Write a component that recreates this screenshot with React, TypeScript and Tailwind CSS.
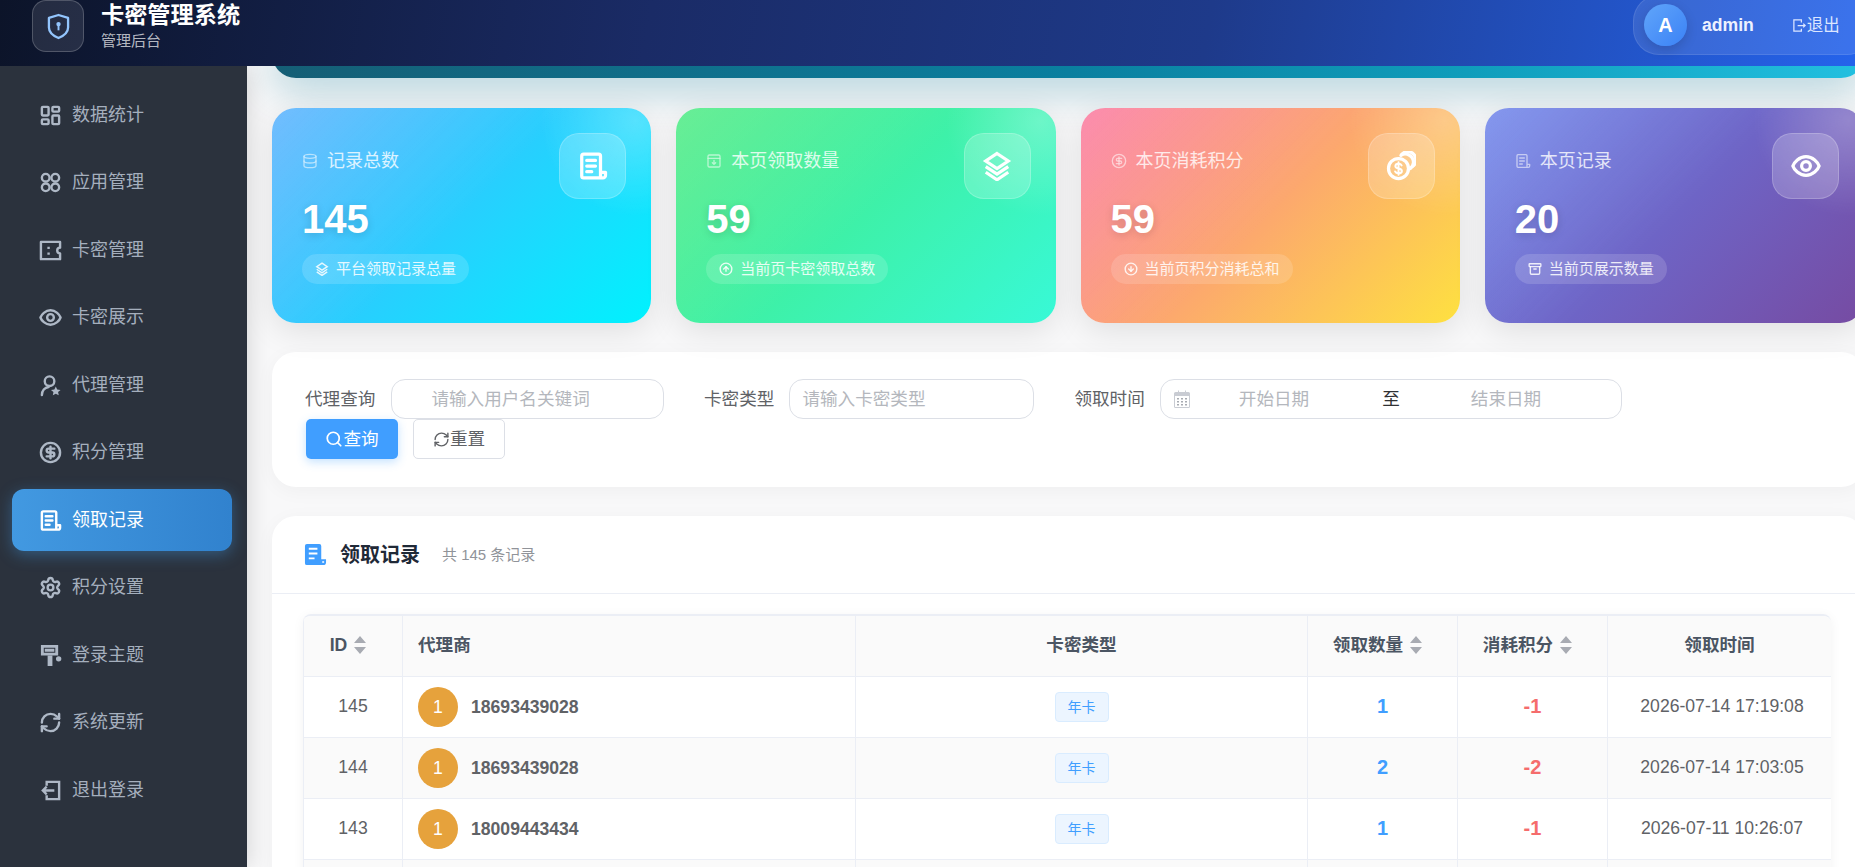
import React from "react";
import { Archive, CircleArrowDown, CircleArrowUp, CircleDollarSign, Database, LayoutDashboard, RefreshCw, Search, Settings } from "lucide-react";

type P = { className?: string };
const base = { fill: "none", stroke: "currentColor", strokeWidth: 2, strokeLinecap: "round" as const, strokeLinejoin: "round" as const, viewBox: "0 0 24 24" };

const Apps = ({ className }: P) => (
  <svg {...base} className={className}>
    <circle cx="7" cy="7" r="4" /><circle cx="17" cy="7" r="4" /><circle cx="7" cy="17" r="4" /><circle cx="17" cy="17" r="4" />
  </svg>
);
const TicketIcon = ({ className }: P) => (
  <svg {...base} className={className} strokeLinecap="butt">
    <path d="M2 3h20v6a3 3 0 0 0 0 6v6H2z" />
    <path d="M10 8v2.500M10 14v2.500" />
  </svg>
);
const EyeIcon = ({ className }: P) => (
  <svg {...base} className={className}>
    <path d="M12 4.500C6.500 4.500 2.500 9 1.500 12c1 3 5 7.500 10.500 7.500S21.500 15 22.500 12C21.500 9 17.500 4.500 12 4.500z" />
    <circle cx="12" cy="12" r="3.500" />
  </svg>
);
const UserStarIcon = ({ className }: P) => (
  <svg {...base} className={className}>
    <circle cx="11" cy="7.500" r="5" />
    <path d="M3 22c0-4.500 3-8 7-8.500" />
    <path d="M17.500 13l1.500 3.200 3.500.4-2.600 2.300.7 3.400-3.100-1.700-3.100 1.700.7-3.400-2.600-2.300 3.500-.4z" fill="currentColor" stroke="none" />
  </svg>
);
const RecordIcon = ({ className }: P) => (
  <svg {...base} className={className}>
    <path d="M18 17V4a1.500 1.500 0 0 0-1.500-1.500h-12A1.500 1.500 0 0 0 3 4v16a1.500 1.500 0 0 0 1.500 1.500H20a2 2 0 0 0 2-2V17h-4v4.500" />
    <path d="M7 7.500h7M7 12h7M7 16.500h4" />
  </svg>
);
const RecordFilled = ({ className }: P) => (
  <svg viewBox="0 0 24 24" className={className}>
    <path fill="currentColor" d="M3 1h13a2 2 0 0 1 2 2v14h5v3a3 3 0 0 1-3 3H3a2 2 0 0 1-2-2V3a2 2 0 0 1 2-2z" />
    <path fill="#fff" d="M5 5h9v2H5zM5 10h9v2H5zM5 15h6v2H5zM19 19h2v1.500h-2z" />
  </svg>
);
const CalendarDown = ({ className }: P) => (
  <svg {...base} className={className}>
    <rect x="3" y="3" width="18" height="18" rx="2" />
    <path d="M3 8h18M12 11v6M9.500 14.500 12 17l2.500-2.500" />
  </svg>
);
const LogoutLeft = ({ className }: P) => (
  <svg {...base} className={className} strokeLinecap="butt" strokeLinejoin="miter">
    <path d="M8 7V3h13v18H8v-4" />
    <path d="M16 12H4M8 8l-4 4 4 4" />
  </svg>
);
const LogoutRight = ({ className }: P) => (
  <svg {...base} className={className} strokeLinecap="butt" strokeLinejoin="miter">
    <path d="M15 7V3H3v18h12v-4" />
    <path d="M9 12h12M18 9l3 3-3 3" />
  </svg>
);
const Roller = ({ className }: P) => (
  <svg viewBox="0 0 24 24" className={className} fill="currentColor">
    <path fillRule="evenodd" d="M2 1h18v11H2zM5 4v5h12V4z" />
    <path d="M6 5h10v3H6zM9 12h5v11H9z" />
    <circle cx="20.500" cy="15.500" r="2.800" />
  </svg>
);
const Stack = ({ className }: P) => (
  <svg {...base} className={className} strokeLinejoin="miter" strokeLinecap="butt">
    <path d="M12 2 21 8l-9 6-9-6z" />
    <path d="M3 12.500l9 6 9-6M3 17l9 6 9-6" />
  </svg>
);
const CoinStack = ({ className }: P) => (
  <svg {...base} className={className}>
    <path d="M12 3.500a6.500 6.500 0 1 1 9 9" />
    <path d="M12.500 3a6.800 6.800 0 0 1 9.500 6 7 7 0 0 1-2.500 5" />
    <circle cx="10" cy="14" r="8" />
    <path d="M12.500 11.500c-.5-1-1.500-1.300-2.500-1.300-1.300 0-2.500.7-2.500 1.900 0 2.500 5.200 1.300 5.200 3.800 0 1.200-1.300 1.900-2.700 1.900-1.100 0-2.200-.4-2.700-1.400M10 9v10" strokeWidth="1.600" />
  </svg>
);
const Shield = ({ className }: P) => (
  <svg viewBox="0 0 24 28" className={className} fill="none" stroke="currentColor" strokeWidth="2.400" strokeLinejoin="round">
    <path d="M12 2 22 5v10c0 5-4 8.500-10 11C6 23.500 2 20 2 15V5z" />
    <circle cx="12" cy="11.500" r="2.300" fill="currentColor" stroke="none" />
    <path d="M12 12v6" strokeWidth="2" />
  </svg>
);
const Calendar = ({ className }: P) => (
  <svg viewBox="0 0 16 18" className={className}>
    <path fill="#c9ccd3" d="M1.500 2H4V.5h1V2h6V.5h1V2h2.500A1.500 1.500 0 0 1 16 3.500v13a1.500 1.500 0 0 1-1.500 1.500h-13A1.500 1.500 0 0 1 0 16.500v-13A1.500 1.500 0 0 1 1.500 2z" />
    <path fill="#fff" d="M1 6h14v10.500a.5.5 0 0 1-.5.5h-13a.5.5 0 0 1-.5-.5z" />
    <path fill="#a8abb2" d="M3 8h2v1.500H3zM7 8h2v1.500H7zM11 8h2v1.500h-2zM3 11h2v1.500H3zM7 11h2v1.500H7zM11 11h2v1.500h-2zM3 14h2v1.500H3zM7 14h2v1.500H7zM11 14h2v1.500h-2z" />
  </svg>
);
const Sort = () => (
  <svg viewBox="0 0 12 18" className="h-[18px] w-[12px] shrink-0" fill="#a8abb2">
    <path d="M6 0l6 7H0zM0 11h12l-6 7z" />
  </svg>
);

const nav = [
  ["数据统计", LayoutDashboard], ["应用管理", Apps], ["卡密管理", TicketIcon], ["卡密展示", EyeIcon],
  ["代理管理", UserStarIcon], ["积分管理", CircleDollarSign], ["领取记录", RecordIcon], ["积分设置", Settings],
  ["登录主题", Roller], ["系统更新", RefreshCw], ["退出登录", LogoutLeft],
] as const;

const cards = [
  { bg: "bg-[radial-gradient(circle_at_96%_6%,rgba(255,255,255,0.25),transparent_95px),linear-gradient(135deg,rgba(255,255,255,0.2),transparent_50%),linear-gradient(135deg,#4facfe,#00f2fe)]", title: "记录总数", TI: Database, value: "145", chip: "平台领取记录总量", CI: Stack, BI: RecordIcon },
  { bg: "bg-[radial-gradient(circle_at_96%_6%,rgba(255,255,255,0.25),transparent_95px),linear-gradient(135deg,rgba(255,255,255,0.2),transparent_50%),linear-gradient(135deg,#43e97b,#38f9d7)]", title: "本页领取数量", TI: CalendarDown, value: "59", chip: "当前页卡密领取总数", CI: CircleArrowUp, BI: Stack },
  { bg: "bg-[radial-gradient(circle_at_96%_6%,rgba(255,255,255,0.25),transparent_95px),linear-gradient(135deg,rgba(255,255,255,0.2),transparent_50%),linear-gradient(135deg,#fa709a,#fee140)]", title: "本页消耗积分", TI: CircleDollarSign, value: "59", chip: "当前页积分消耗总和", CI: CircleArrowDown, BI: CoinStack },
  { bg: "bg-[radial-gradient(circle_at_96%_6%,rgba(255,255,255,0.25),transparent_95px),linear-gradient(135deg,rgba(255,255,255,0.2),transparent_50%),linear-gradient(135deg,#667eea,#764ba2)]", title: "本页记录", TI: RecordIcon, value: "20", chip: "当前页展示数量", CI: Archive, BI: EyeIcon },
];

const rows = [
  ["145", "18693439028", "1", "-1", "2026-07-14 17:19:08"],
  ["144", "18693439028", "2", "-2", "2026-07-14 17:03:05"],
  ["143", "18009443434", "1", "-1", "2026-07-11 10:26:07"],
];

const th = "h-[61px] border-r border-b border-[#ebeef5] bg-[#fafafa] px-[15px] pb-[2px] text-[17.600px] font-bold text-[#4b5563]";
const tdBase = "h-[61px] border-r border-b border-[#ebeef5] px-[15px] text-center";
const td = `${tdBase} pb-[2px] text-[17.600px] text-[#606266]`;

const SortHead = ({ label }: { label: string }) => (
  <span className="flex items-center justify-center gap-[7px] pr-[10px]">{label}<Sort /></span>
);

export default function App() {
  return (
    <div className="flex h-screen w-full flex-col overflow-hidden bg-[#f8f8f9] [font-family:'Liberation_Sans','Noto_Sans_CJK_SC',sans-serif]">
      <header className="relative z-20 flex h-[66px] shrink-0 items-start justify-between overflow-hidden bg-[linear-gradient(100deg,#0c1429_0%,#1a2b66_35%,#1e3a8a_65%,#2563eb_100%)]">
        <div className="ml-[32px] flex items-start">
          <div className="flex h-[52px] w-[52px] items-center justify-center rounded-[14px] border border-white/20 bg-white/10 text-[#93c5fd]">
            <Shield className="h-[27px] w-[23px]" />
          </div>
          <div className="ml-[17px] flex flex-col">
            <div className="h-[30px] text-[23.200px] font-bold leading-[30px] text-white">卡密管理系统</div>
            <div className="mt-[1px] text-[15px] leading-[20px] text-white/70">管理后台</div>
          </div>
        </div>
        <div className="-mr-[18px] -mt-[5px] flex h-[60px] w-[240px] shrink-0 items-center rounded-[26px] border border-white/10 bg-white/10 pl-[10px]">
          <div className="flex h-[42px] w-[43px] items-center justify-center rounded-full bg-[linear-gradient(135deg,#60a5fa,#3b82f6)] text-[20px] font-bold text-white shadow-[0_4px_12px_rgba(0,0,0,0.15)]">A</div>
          <span className="ml-[15px] text-[17.600px] font-bold text-[#eef2ff]">admin</span>
          <span className="ml-[38px] flex items-center text-[16.500px] text-[#dbe6ff]">
            <LogoutRight className="h-[15px] w-[15px]" />退出
          </span>
        </div>
      </header>

      <div className="flex min-h-0 flex-1">
        <aside className="relative z-10 flex w-[247px] shrink-0 flex-col gap-[5.500px] bg-[#2b323d] pl-[12px] pr-[15px] pt-[18.400px] shadow-[4px_0_20px_rgba(0,0,0,0.12)]">
          {nav.map(([label, Icon]) => {
            const active = label === "领取记录";
            return (
              <div key={label} className={`flex h-[62px] shrink-0 items-center rounded-[12px] pl-[27px] text-[18px] ${active ? "bg-[linear-gradient(90deg,#4299e1,#3182ce)] text-white shadow-[0_4px_15px_rgba(66,153,225,0.4)]" : "text-[#a5afbd]"}`}>
                <Icon className={`h-[23px] w-[23px] shrink-0 [stroke-width:2.500] ${active ? "text-white" : "text-[#aeb8c6]"}`} />
                <span className="ml-[10px]">{label}</span>
              </div>
            );
          })}
        </aside>

        <main className="min-w-0 flex-1 overflow-hidden">
          <div className="ml-[25px] w-[1593px]">
            <div className="-mt-[20px] h-[32px] rounded-b-[24px] bg-[linear-gradient(90deg,#155e75,#0a7f9f_50%,#0f9dbb_75%,#22c0e0)] shadow-[0_10px_40px_rgba(8,120,150,0.35)]" />

            <section className="mt-[30px] grid w-[1592px] grid-cols-4 gap-[25px]">
              {cards.map((c) => (
                <div key={c.title} className={`flex h-[215px] items-start justify-between rounded-[24px] pl-[30px] shadow-[0_8px_32px_rgba(0,0,0,0.1)] ${c.bg}`}>
                  <div className="flex flex-col items-start pt-[40px] text-white">
                    <div className="flex h-[26px] items-center text-[18px] text-white/80">
                      <c.TI className="h-[16px] w-[16px] opacity-70" />
                      <span className="ml-[9px]">{c.title}</span>
                    </div>
                    <div className="mt-[21px] h-[48px] text-[40px] font-bold leading-[48px] [text-shadow:0_2px_8px_rgba(0,0,0,0.15)]">{c.value}</div>
                    <div className="mt-[11px] flex h-[30px] items-center rounded-[15px] bg-white/15 pl-[13px] pr-[13px] text-[15px] text-white/85">
                      <c.CI className="h-[14px] w-[14px] [stroke-width:2.400]" />
                      <span className="ml-[7px]">{c.chip}</span>
                    </div>
                  </div>
                  <div className="mr-[25px] mt-[25px] flex h-[66px] w-[67px] items-center justify-center rounded-[20px] border border-white/20 bg-white/20 text-white">
                    <c.BI className="h-[30px] w-[30px] [stroke-width:2.600]" />
                  </div>
                </div>
              ))}
            </section>

            <section className="mt-[29px] h-[135px] rounded-[24px] bg-white pl-[33px] pt-[27px] shadow-[0_4px_20px_rgba(0,0,0,0.04)]">
              <div className="flex flex-wrap items-start gap-x-[40px] pr-[33px] text-[17.600px]">
                <div className="flex h-[40px] items-center">
                  <span className="mr-[16px] text-[#606266]">代理查询</span>
                  <div className="flex h-[40px] w-[273px] items-center rounded-[14px] border border-[#dcdfe6] pl-[39px] text-[#b4b7bd]">请输入用户名关键词</div>
                </div>
                <div className="-ml-[0.400px] flex h-[40px] items-center">
                  <span className="mr-[15px] text-[#606266]">卡密类型</span>
                  <div className="flex h-[40px] w-[245px] items-center rounded-[14px] border border-[#dcdfe6] pl-[12px] text-[#b4b7bd]">请输入卡密类型</div>
                </div>
                <div className="flex h-[40px] items-center">
                  <span className="mr-[15px] text-[#606266]">领取时间</span>
                  <div className="flex h-[40px] w-[462px] items-center rounded-[14px] border border-[#dcdfe6] pl-[13px] text-[#b4b7bd]">
                    <Calendar className="h-[18px] w-[16px]" />
                    <span className="ml-[49px]">开始日期</span>
                    <span className="ml-[73px] text-[#303133]">至</span>
                    <span className="ml-[71px]">结束日期</span>
                  </div>
                </div>
                <div className="ml-[1px] flex h-[40px] items-center gap-[15px]">
                  <button className="flex h-[40px] w-[92px] items-center justify-center rounded-[5px] bg-[#409eff] text-white shadow-[0_3px_10px_rgba(64,158,255,0.3)]">
                    <Search className="h-[18px] w-[18px] [stroke-width:2.300]" />查询
                  </button>
                  <button className="flex h-[40px] w-[92px] items-center justify-center rounded-[5px] border border-[#dcdfe6] bg-white text-[#606266]">
                    <RefreshCw className="h-[17px] w-[17px]" />重置
                  </button>
                </div>
              </div>
            </section>

            <section className="mt-[29px] rounded-t-[24px] bg-white shadow-[0_4px_20px_rgba(0,0,0,0.04)]">
              <div className="flex h-[78px] items-center border-b border-[#ebeef5] pl-[32px]">
                <RecordFilled className="h-[23px] w-[23px] text-[#409eff]" />
                <span className="ml-[13px] pt-[1px] text-[20px] font-bold text-[#1f2937]">领取记录</span>
                <span className="ml-[22px] pt-[2px] text-[15px] text-[#909399]">共 145 条记录</span>
              </div>
              <div className="ml-[31px] mt-[20px] w-[1528px] overflow-hidden rounded-t-[8px] border-t-2 border-[#ebeef5] shadow-[0_2px_12px_rgba(0,0,0,0.05)]">
                <table className="w-full table-fixed border-separate border-spacing-0 border-l border-[#ebeef5]">
                  <colgroup>
                    <col className="w-[99px]" /><col className="w-[453px]" /><col className="w-[452px]" /><col className="w-[150px]" /><col className="w-[150px]" /><col className="w-[224px]" />
                  </colgroup>
                  <thead>
                    <tr>
                      <th className={th}><SortHead label="ID" /></th>
                      <th className={`${th} text-left`}>代理商</th>
                      <th className={th}>卡密类型</th>
                      <th className={th}><SortHead label="领取数量" /></th>
                      <th className={th}><SortHead label="消耗积分" /></th>
                      <th className={th}>领取时间</th>
                    </tr>
                  </thead>
                  <tbody>
                    {rows.map((r, i) => (
                      <tr key={r[0]} className={i % 2 ? "bg-[#fafafa]" : "bg-white"}>
                        <td className={td}>{r[0]}</td>
                        <td className={`${tdBase} text-[17.600px] text-[#606266]`}>
                          <div className="flex items-center">
                            <span className="flex h-[40px] w-[40px] items-center justify-center rounded-full bg-[#e6a23c] text-white">1</span>
                            <span className="ml-[13px] font-bold">{r[1]}</span>
                          </div>
                        </td>
                        <td className={tdBase}>
                          <span className="inline-flex h-[30px] w-[54px] items-center justify-center rounded-[4px] border border-[#d9ecff] bg-[#ecf5ff] text-[14px] text-[#409eff]">年卡</span>
                        </td>
                        <td className={`${tdBase} pb-[2px] text-[20px] font-bold text-[#409eff]`}>{r[2]}</td>
                        <td className={`${tdBase} pb-[2px] text-[20px] font-bold text-[#f56c6c]`}>{r[3]}</td>
                        <td className={`${td} pl-[20px]`}>{r[4]}</td>
                      </tr>
                    ))}
                    <tr className="bg-[#fafafa]">
                      <td className={td} /><td className={td} /><td className={td} /><td className={td} /><td className={td} /><td className={td} />
                    </tr>
                  </tbody>
                </table>
              </div>
            </section>
          </div>
        </main>
      </div>
    </div>
  );
}
